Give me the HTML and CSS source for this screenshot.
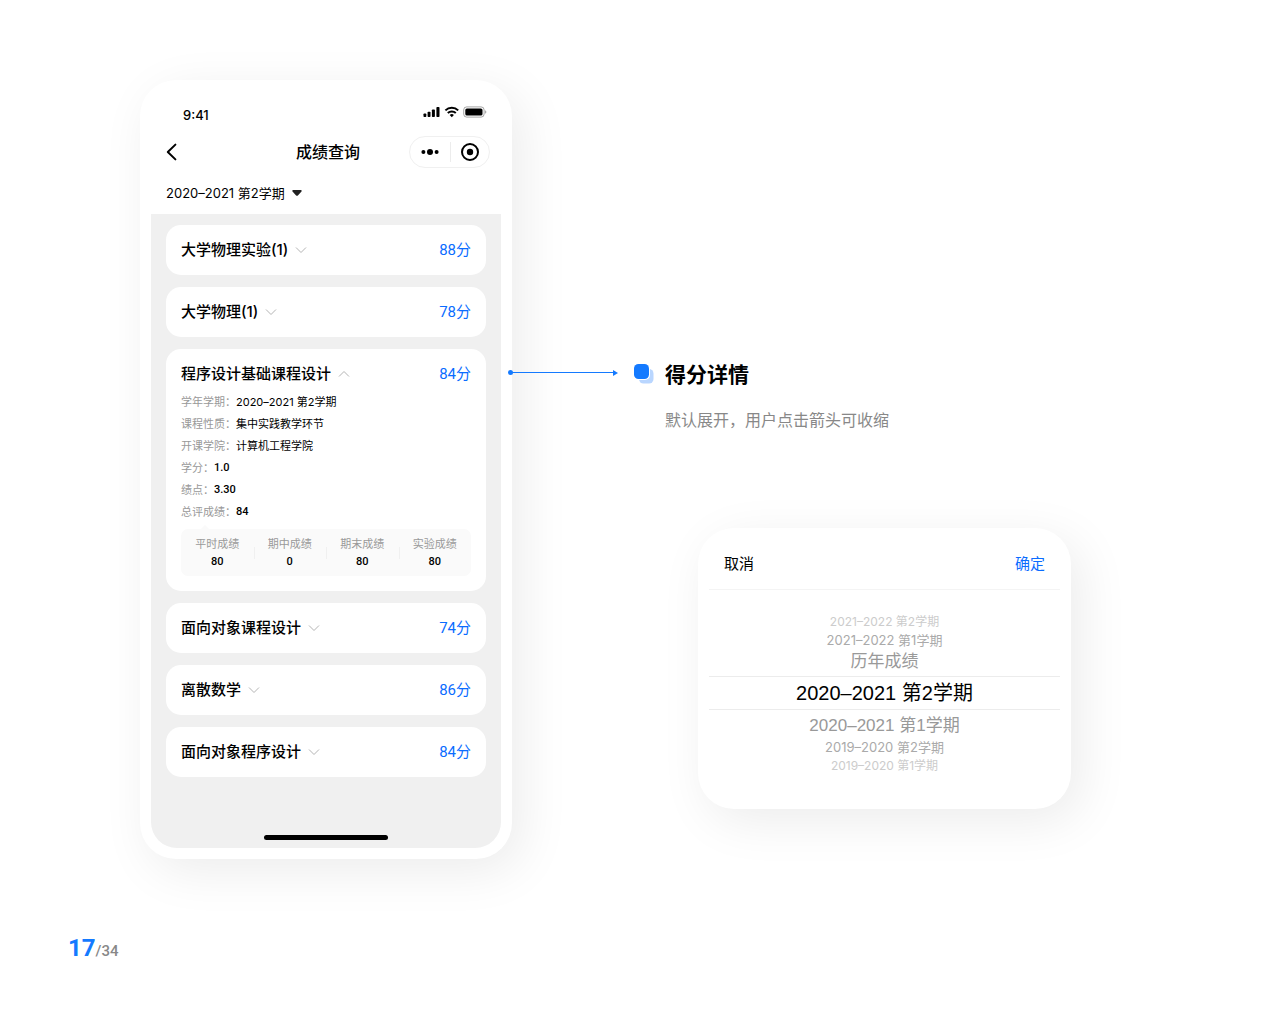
FILE: index.html
```html
<!DOCTYPE html>
<html lang="zh-CN">
<head>
  <meta charset="UTF-8">
  <meta name="viewport" content="width=device-width, initial-scale=1.0">
  <title>成绩查询</title>
  <link rel="stylesheet" href="styles.css">
</head>
<body>
  <main class="board">
    <section class="phone">
      <div class="status-bar">
        <span class="time">9:41</span>
        <svg class="status-icons" width="64" height="12" viewBox="0 0 64 12">
          <rect x="0.5" y="7.5" width="2.8" height="3.5" rx="0.8"/>
          <rect x="4.6" y="5.8" width="2.9" height="5.2" rx="0.8"/>
          <rect x="8.9" y="3.4" width="3" height="7.6" rx="0.8"/>
          <rect x="13.4" y="1" width="3.1" height="10" rx="0.8"/>
          <path d="M22.4 4.4a9.2 9.2 0 0 1 12.8 0M24.8 7a5.8 5.8 0 0 1 8 0" fill="none" stroke="#000" stroke-width="2"/>
          <path d="M28.8 11.2l-2.1-2.2a3 3 0 0 1 4.2 0z"/>
          <rect x="40.7" y="0.9" width="20.4" height="10.2" rx="3" fill="none" stroke="#000" stroke-opacity="0.35"/>
          <rect x="42.3" y="2.5" width="17.2" height="7" rx="1.6"/>
          <path d="M62.2 4.2a2 2 0 0 1 0 3.6z" fill-opacity="0.4"/>
        </svg>
      </div>

      <header class="nav-bar">
        <button class="back" type="button" aria-label="返回">
          <svg width="12" height="18" viewBox="0 0 12 18"><path d="M9.4 1.6L1.8 9l7.6 7.4" fill="none" stroke="#000" stroke-width="2" stroke-linecap="round" stroke-linejoin="round"/></svg>
        </button>
        <h1>成绩查询</h1>
        <div class="capsule">
          <button type="button" aria-label="更多">
            <svg width="20" height="20" viewBox="0 0 20 20"><circle cx="3.4" cy="10" r="2"/><circle cx="10" cy="10" r="3"/><circle cx="16.6" cy="10" r="2"/></svg>
          </button>
          <button type="button" aria-label="关闭">
            <svg width="20" height="20" viewBox="0 0 20 20"><circle cx="10" cy="10" r="8" fill="none" stroke="#000" stroke-width="2"/><circle cx="10" cy="10" r="3.2"/></svg>
          </button>
        </div>
      </header>

      <div class="term">
        <select id="term" aria-label="学期">
          <option>2020–2021 第2学期</option>
        </select>
        <svg width="10" height="6" viewBox="0 0 10 6"><path d="M1.2 0h7.6c.9 0 1.2.8.7 1.4L5.9 5.4c-.5.6-1.3.6-1.8 0L.5 1.4C0 .8.3 0 1.2 0z" fill="#222"/></svg>
      </div>

      <div class="screen">
        <details class="course">
          <summary><span class="name">大学物理实验(1)</span><svg class="chevron" viewBox="0 0 12 8"><path d="M1 1.5l5 5 5-5"/></svg><span class="score">88分</span></summary>
        </details>
        <details class="course">
          <summary><span class="name">大学物理(1)</span><svg class="chevron" viewBox="0 0 12 8"><path d="M1 1.5l5 5 5-5"/></svg><span class="score">78分</span></summary>
        </details>
        <details class="course" open>
          <summary><span class="name">程序设计基础课程设计</span><svg class="chevron" viewBox="0 0 12 8"><path d="M1 1.5l5 5 5-5"/></svg><span class="score">84分</span></summary>
          <dl class="info">
            <div><dt>学年学期：</dt><dd>2020–2021 第2学期</dd></div>
            <div><dt>课程性质：</dt><dd>集中实践教学环节</dd></div>
            <div><dt>开课学院：</dt><dd>计算机工程学院</dd></div>
            <div><dt>学分：</dt><dd class="num">1.0</dd></div>
            <div><dt>绩点：</dt><dd class="num">3.30</dd></div>
            <div><dt>总评成绩：</dt><dd class="num">84</dd></div>
          </dl>
          <dl class="parts">
            <div><dt>平时成绩</dt><dd>80</dd></div>
            <div><dt>期中成绩</dt><dd>0</dd></div>
            <div><dt>期末成绩</dt><dd>80</dd></div>
            <div><dt>实验成绩</dt><dd>80</dd></div>
          </dl>
        </details>
        <details class="course">
          <summary><span class="name">面向对象课程设计</span><svg class="chevron" viewBox="0 0 12 8"><path d="M1 1.5l5 5 5-5"/></svg><span class="score">74分</span></summary>
        </details>
        <details class="course">
          <summary><span class="name">离散数学</span><svg class="chevron" viewBox="0 0 12 8"><path d="M1 1.5l5 5 5-5"/></svg><span class="score">86分</span></summary>
        </details>
        <details class="course">
          <summary><span class="name">面向对象程序设计</span><svg class="chevron" viewBox="0 0 12 8"><path d="M1 1.5l5 5 5-5"/></svg><span class="score">84分</span></summary>
        </details>
        <div class="home-indicator"></div>
      </div>
    </section>

    <div class="connector"></div>

    <aside class="side">
      <div class="note">
        <svg width="20" height="20" viewBox="0 0 20 20">
          <rect x="5" y="5" width="14.5" height="14.5" rx="4.5" fill="#b9d6ff"/>
          <rect x="-0.5" y="-0.5" width="16.5" height="16.5" rx="5" fill="#fff"/>
          <rect x="0" y="0" width="15" height="15" rx="4.5" fill="#147aff"/>
        </svg>
        <div>
          <h2>得分详情</h2>
          <p>默认展开，用户点击箭头可收缩</p>
        </div>
      </div>

      <section class="picker">
        <div class="picker-bar">
          <button type="button">取消</button>
          <button class="confirm" type="button">确定</button>
        </div>
        <ul class="wheel" role="listbox" aria-label="选择学期">
          <li class="far" role="option">2021–2022 第2学期</li>
          <li class="mid" role="option">2021–2022 第1学期</li>
          <li class="near" role="option">历年成绩</li>
          <li class="current" role="option" aria-selected="true">2020–2021 第2学期</li>
          <li class="near" role="option">2020–2021 第1学期</li>
          <li class="mid" role="option">2019–2020 第2学期</li>
          <li class="far" role="option">2019–2020 第1学期</li>
        </ul>
      </section>
    </aside>
  </main>

  <footer class="page-no"><strong>17</strong>/34</footer>
</body>
</html>
```

FILE: styles.css
```css
* {
  box-sizing: border-box;
}
body {
  margin: 0;
  background: #fff;
  color: #000;
  font-family: Inter, "Noto Sans CJK SC", sans-serif;
  font-size: 13px;
}
h1, h2, p, dl, dd, ul {
  margin: 0;
  padding: 0;
}
button, select {
  padding: 0;
  border: none;
  background: none;
  color: inherit;
  font: inherit;
  cursor: pointer;
}
svg {
  display: block;
  flex: none;
}

.board {
  display: grid;
  grid-template-columns: 372fr 122fr 437fr;
  align-items: start;
  padding: 80px 209px 0 140px;
}

/* phone */
.phone {
  padding: 0 11px 11px;
  border-radius: 36px;
  background: #fff;
  box-shadow: 10px 12px 50px rgba(0, 0, 0, 0.08);
}
.status-bar {
  display: flex;
  justify-content: space-between;
  padding: 26px 14px 0 32px;
}
.time {
  line-height: 18px;
  font-weight: 500;
}
.nav-bar {
  display: grid;
  grid-template-columns: 1fr auto 1fr;
  align-items: center;
  padding: 12px 11px 0 15px;
}
.nav-bar h1 {
  font-size: 16px;
  font-weight: 500;
  line-height: 24px;
}
.back {
  justify-self: start;
}
.capsule {
  display: flex;
  justify-self: end;
  padding: 5px 0;
  border: 1px solid #f0f0f0;
  border-radius: 16px;
}
.capsule button {
  padding: 0 10px;
}
.capsule button + button {
  padding: 0 9px;
  border-left: 1px solid #ececec;
}
.term {
  display: flex;
  align-items: center;
  gap: 7px;
  padding: 15px 15px 11px;
}
.term select {
  appearance: none;
  line-height: 20px;
}
.screen {
  display: flex;
  flex-direction: column;
  gap: 12px;
  padding: 11px 15px 8px;
  border-radius: 0 0 26px 26px;
  background: #f0f0f0;
}
.home-indicator {
  width: 39%;
  max-width: 125px;
  height: 5px;
  margin: 46px auto 0;
  border-radius: 3px;
  background: #000;
}

/* course cards */
.course {
  padding: 0 15px;
  border-radius: 15px;
  background: #fff;
}
.course summary {
  display: flex;
  align-items: center;
  line-height: 50px;
  font-size: 15px;
  list-style: none;
  cursor: pointer;
}
.name {
  font-weight: 500;
}
.chevron {
  width: 12px;
  height: 8px;
  margin-left: 7px;
  fill: none;
  stroke: #b4b4b4;
}
.course[open] .chevron {
  transform: rotate(180deg);
}
.score {
  margin-left: auto;
  color: #0a6cff;
  font-family: Roboto, "Noto Sans CJK SC", sans-serif;
}
.info,
.parts {
  font-size: 11px;
}
.info {
  margin-top: -8px;
  line-height: 22px;
}
.info div {
  display: flex;
}
dt {
  color: #999;
}
.num,
.parts dd {
  font-family: Roboto, "Noto Sans CJK SC", sans-serif;
  font-weight: 500;
}
.parts {
  position: relative;
  display: grid;
  grid-template-columns: repeat(4, 1fr);
  margin: 6px 0 15px;
  padding: 6px 0 5px;
  border-radius: 7px;
  background: #fafafa;
  line-height: 18px;
  text-align: center;
}
.parts::before {
  content: "";
  position: absolute;
  left: 20px;
  top: -4px;
  border: 4px solid transparent;
  border-top: none;
  border-bottom-color: #fafafa;
}
.parts div + div {
  background: linear-gradient(#f0f0f0, #f0f0f0) left center / 1px 12px no-repeat;
}

/* arrow from the card to its note */
.connector {
  position: relative;
  height: 1px;
  margin: 292px 18px 0 -2px;
  background: #147aff;
}
.connector::before,
.connector::after {
  content: "";
  position: absolute;
}
.connector::before {
  left: -2px;
  top: -2px;
  width: 5px;
  height: 5px;
  border-radius: 50%;
  background: #147aff;
}
.connector::after {
  right: -2px;
  top: -2px;
  border: 3px solid transparent;
  border-width: 3px 0 3px 5px;
  border-left-color: #147aff;
}

/* note and picker */
.side {
  padding-top: 280px;
}
.note {
  display: flex;
  gap: 11px;
}
.note svg {
  margin-top: 4px;
}
.note h2 {
  font-size: 21px;
  font-weight: 700;
  line-height: 30px;
}
.note p {
  margin-top: 18px;
  color: #888;
  font-size: 16px;
  line-height: 24px;
}
.picker {
  margin: 96px 0 0 64px;
  padding: 0 11px 34px;
  border-radius: 36px;
  background: #fff;
  box-shadow: 10px 12px 50px rgba(0, 0, 0, 0.08);
}
.picker-bar {
  display: flex;
  justify-content: space-between;
  padding: 24px 15px 13px;
  border-bottom: 1px solid #f4f4f4;
  font-size: 15px;
  line-height: 24px;
}
.confirm {
  color: #0a6cff;
}
.wheel {
  padding-top: 23px;
  list-style: none;
  text-align: center;
}
.far {
  color: #ccc;
  font-size: 12px;
  line-height: 18px;
}
.mid {
  color: #aaa;
  font-size: 13px;
  line-height: 19px;
}
.near,
.current {
  font-family: "Liberation Sans", "Noto Sans CJK SC", sans-serif;
}
.near {
  color: #999;
  font-size: 17px;
  line-height: 24px;
}
.current {
  margin: 2px 0 4px;
  border: 1px solid #ececec;
  border-width: 1px 0;
  font-size: 20px;
  line-height: 32px;
}

.page-no {
  padding: 71px 68px 48px;
  color: #888;
  font-family: Roboto, sans-serif;
  font-size: 15px;
  font-weight: 500;
  line-height: 36px;
}
.page-no strong {
  color: #147aff;
  font-size: 24px;
  font-weight: 700;
}
```
